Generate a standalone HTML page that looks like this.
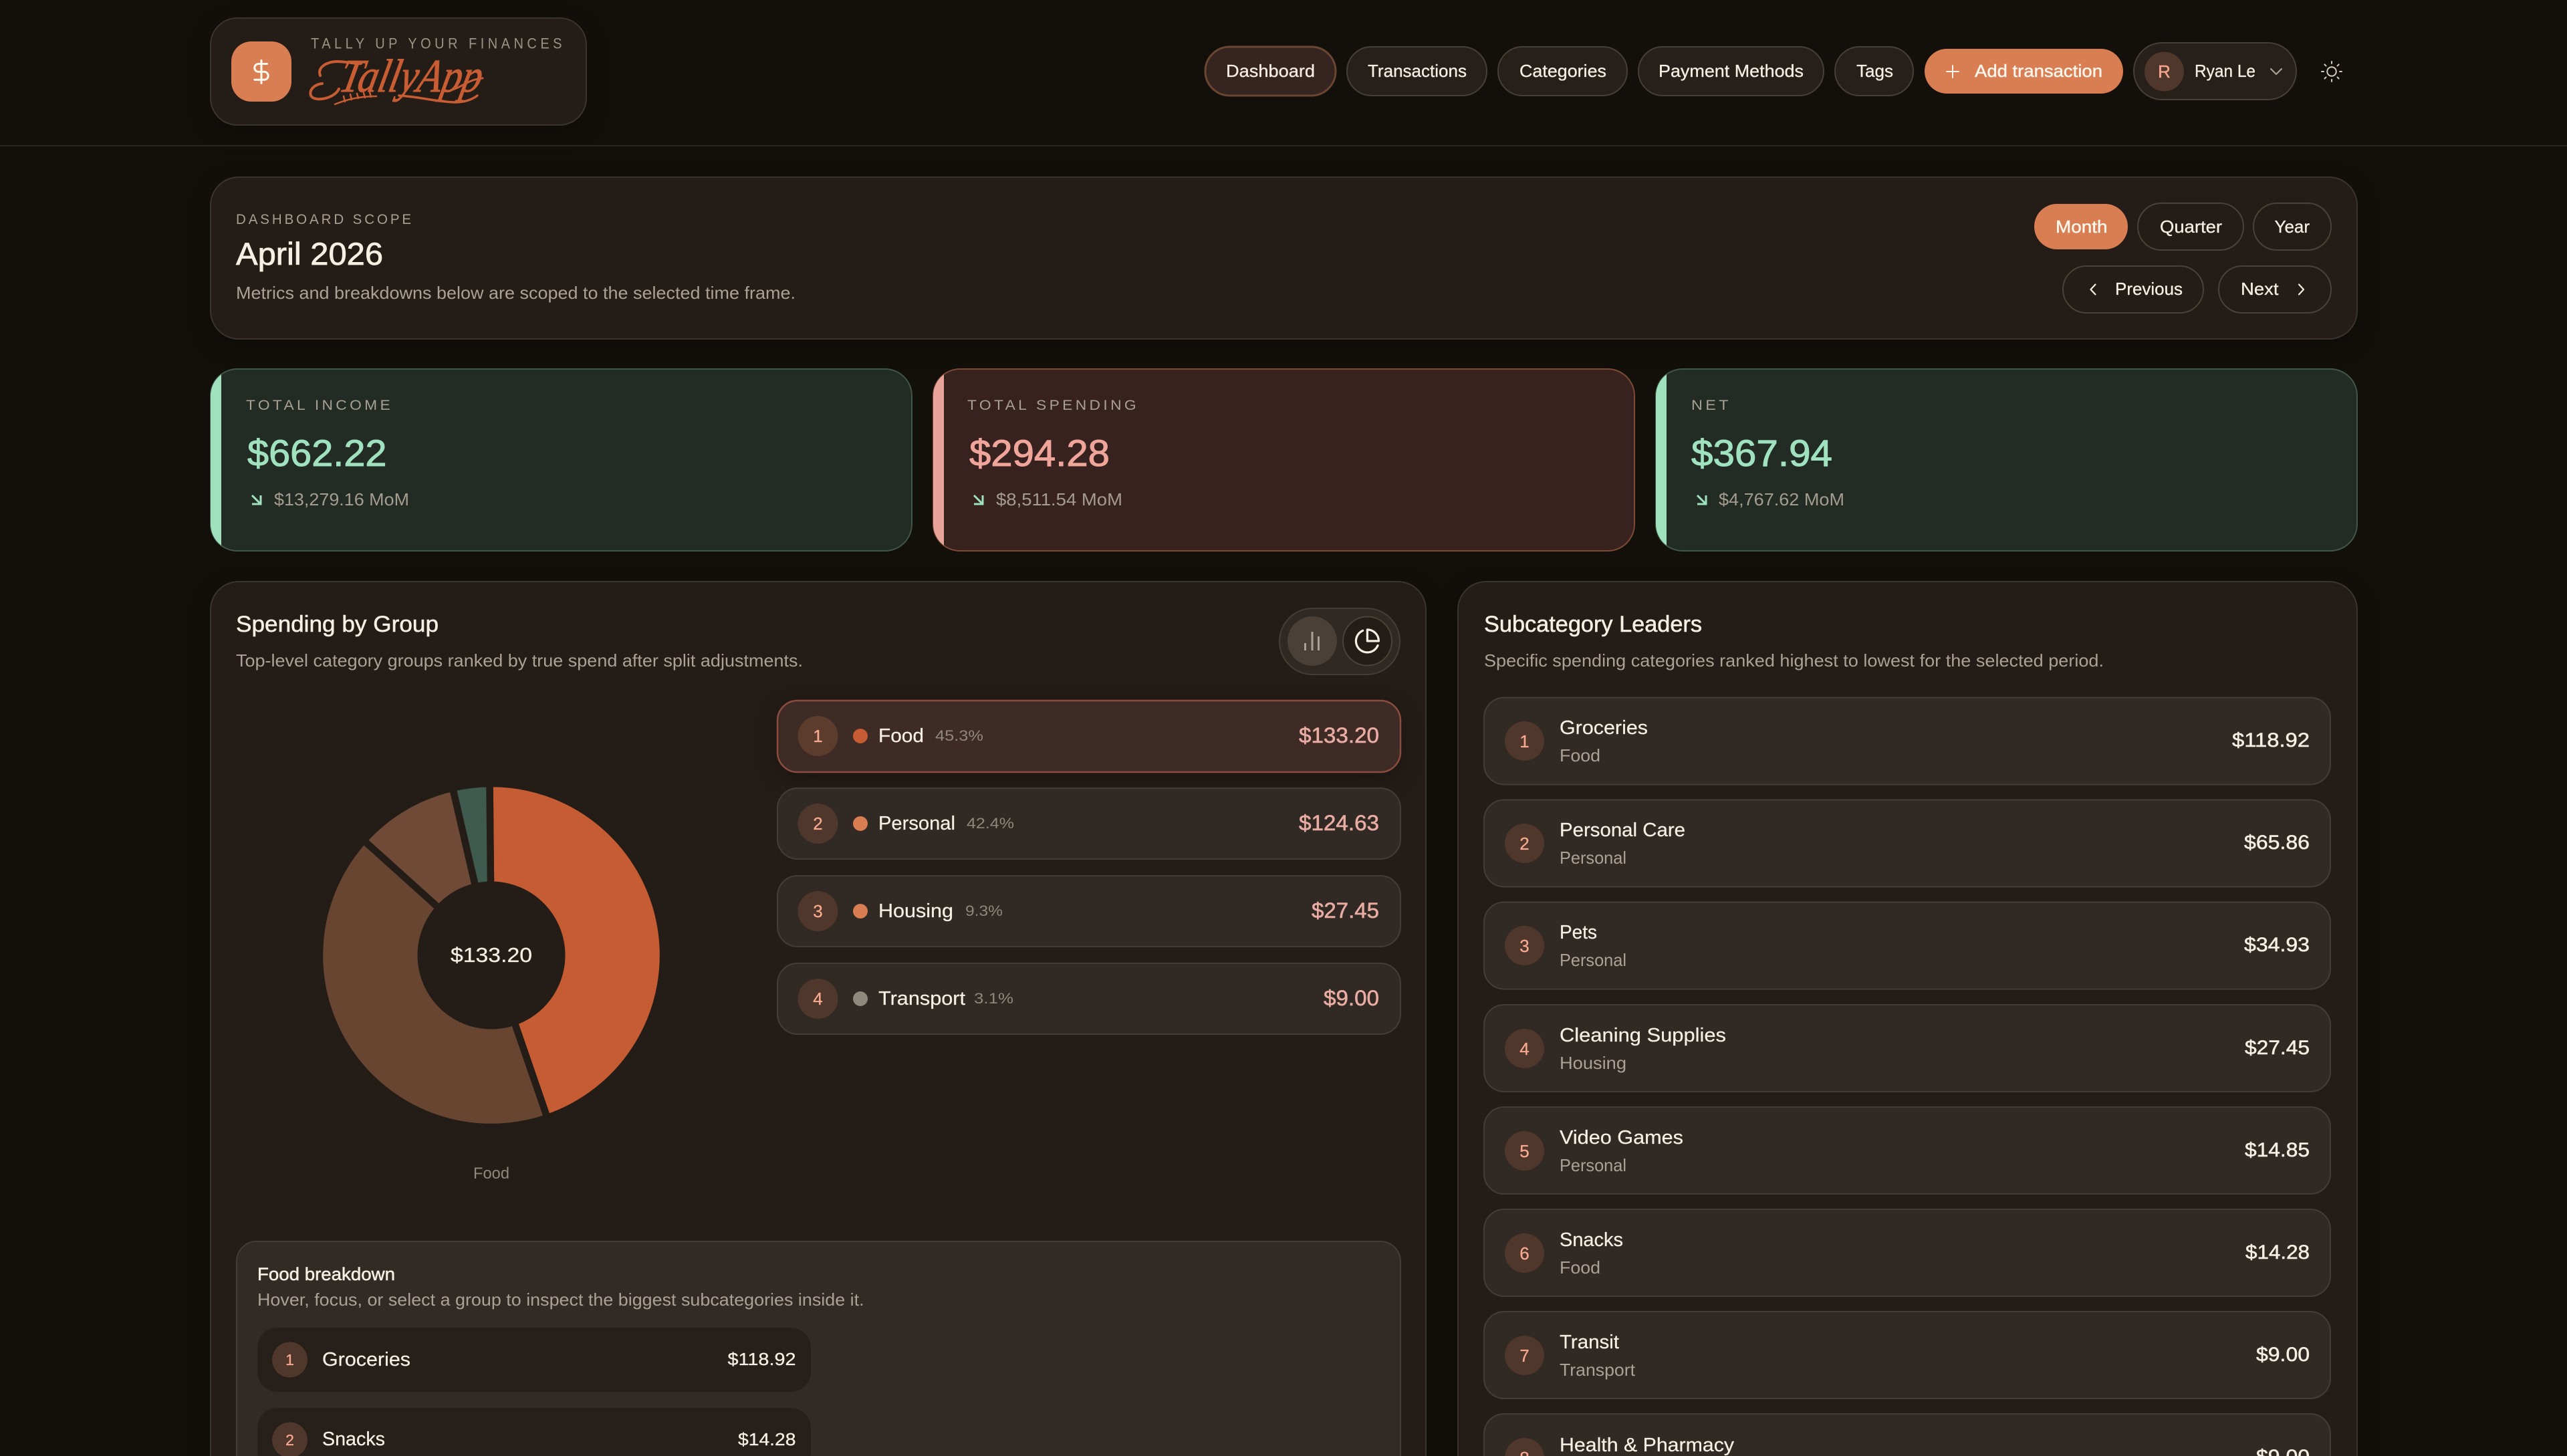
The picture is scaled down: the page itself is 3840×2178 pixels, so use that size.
<!DOCTYPE html>
<html lang="en"><head><meta charset="utf-8"><title>TallyApp Dashboard</title>
<style>
html,body{margin:0;padding:0;width:3840px;height:2178px;overflow:hidden;background:#13100b}
svg{display:block}
text{font-family:"Liberation Sans",sans-serif;font-size:26px;fill:#f6efe4;white-space:pre}
.n{stroke:#f6efe4;stroke-width:.3px}
.m{stroke:#f6efe4;stroke-width:.55px}
.mut{fill:#aaa296}
.ter{fill:#8f887c;font-size:22px}
.lab{fill:#a8a093;font-size:21px}
.pill{fill:#271f1a;stroke:#473e36;stroke-width:2}
.ghost{fill:#241c17;stroke:#4a4138;stroke-width:2}
.row{fill:#312924;stroke:#453d35;stroke-width:2}
.rank{fill:#50372b}
.rn{fill:#f7a991;font-size:26px;text-anchor:middle;stroke:#f7a991;stroke-width:.3px}
.amt{fill:#e9aca2;font-size:32px;stroke:#e9aca2;stroke-width:.6px}
.nm{font-size:29px;stroke:#f6efe4;stroke-width:.25px}
.ico{fill:none;stroke-linecap:round;stroke-linejoin:round}
.sh{filter:drop-shadow(0 10px 16px rgba(0,0,0,.28))}
</style></head><body>
<svg width="3840" height="2178" viewBox="0 0 3840 2178" xmlns="http://www.w3.org/2000/svg">
<defs>
<clipPath id="c1"><rect x="315" y="552" width="1049" height="272" rx="40"/></clipPath>
<clipPath id="c2"><rect x="1396" y="552" width="1049" height="272" rx="40"/></clipPath>
<clipPath id="c3"><rect x="2477" y="552" width="1049" height="272" rx="40"/></clipPath>
</defs>
<rect width="3840" height="2178" fill="#13100b"/>

<!-- header -->
<rect x="0" y="217" width="3840" height="2" fill="#2d2721"/>
<rect class="sh" x="315" y="27" width="562" height="160" rx="40" fill="#241d17" stroke="#3b332c" stroke-width="2"/>
<rect x="346" y="62" width="90" height="90" rx="30" fill="#d97d52"/>
<g class="ico" stroke="#fff6ec" stroke-width="1.800" transform="translate(370.600 87) scale(1.700)"><path d="M12 2v20"/><path d="M17 5H9.500a3.500 3.500 0 0 0 0 7h5a3.500 3.500 0 0 1 0 7H6"/></g>
<text x="465" y="72.600" textLength="381" lengthAdjust="spacingAndGlyphs" style="font-size:22px;fill:#9a9386;letter-spacing:6px">TALLY UP YOUR FINANCES</text>
<g transform="translate(0 137) skewX(-12)">
<text x="505" y="0" textLength="212" lengthAdjust="spacingAndGlyphs" style="font-family:'Liberation Serif',serif;font-style:italic;font-size:70px;fill:#c85c33;stroke:#c85c33;stroke-width:1px">TallyApp</text>
</g>
<g class="ico" stroke="#c85c33">
<path stroke-width="4" d="M479 113C474 100 490 92 505 92C520 92 530 96 540 95"/>
<path stroke-width="4" d="M507 133C500 148 470 153 465 143C462 133 472 126 482 125"/>
<path stroke-width="3.500" d="M597 143C630 145 650 152 680 153C695 153 706 149 714 143"/>
<path stroke-width="3" d="M677 134C692 130 700 119 722 117"/>
<path stroke-width="2.500" d="M501 156C520 148 540 144 563 144M516 152l-2-8M526 149l-2-8M536 147l-2-7M546 146l-2-7M555 145l-2-7"/>
</g>

<!-- nav -->
<rect x="1803" y="70" width="195" height="73" rx="36.500" fill="#35241f" stroke="#6a4632" stroke-width="3"/>
<text class="n" x="1834" y="115" textLength="133" lengthAdjust="spacingAndGlyphs">Dashboard</text>
<rect class="pill" x="2015" y="70" width="209" height="73" rx="36.500"/>
<text class="n" x="2046" y="115" textLength="148" lengthAdjust="spacingAndGlyphs">Transactions</text>
<rect class="pill" x="2241" y="70" width="193" height="73" rx="36.500"/>
<text class="n" x="2273" y="115" textLength="130" lengthAdjust="spacingAndGlyphs">Categories</text>
<rect class="pill" x="2451" y="70" width="277" height="73" rx="36.500"/>
<text class="n" x="2481" y="115" textLength="217" lengthAdjust="spacingAndGlyphs">Payment Methods</text>
<rect class="pill" x="2745" y="70" width="117" height="73" rx="36.500"/>
<text class="n" x="2777" y="115" textLength="55" lengthAdjust="spacingAndGlyphs">Tags</text>
<rect x="2879" y="73" width="297" height="67" rx="33.500" fill="#d97d52"/>
<g class="ico" stroke="#fff6ec" stroke-width="2"><path d="M2912 107h18M2921 98v18"/></g>
<text class="m" x="2954" y="115" textLength="191" lengthAdjust="spacingAndGlyphs" style="fill:#fff6ec">Add transaction</text>
<rect class="pill" x="3192" y="64" width="243" height="85" rx="42.500"/>
<circle cx="3237.500" cy="107" r="29.500" fill="#50372b"/>
<text x="3237.500" y="116" text-anchor="middle" style="fill:#f7a48f;font-size:26px;stroke:#f7a48f;stroke-width:.4px">R</text>
<text class="n" x="3283" y="115" textLength="91" lengthAdjust="spacingAndGlyphs">Ryan Le</text>
<path class="ico" stroke="#a9a195" stroke-width="2.200" d="M3397 103l8 8 8-8"/>
<g class="ico" stroke="#d8cfc0" stroke-width="1.300" transform="translate(3470 89) scale(1.500)"><circle cx="12" cy="12" r="4.500"/><path d="M12 2v2M12 20v2M4.930 4.930l1.410 1.410M17.660 17.660l1.410 1.410M2 12h2M20 12h2M6.340 17.660l-1.410 1.410M19.070 4.930l-1.410 1.410"/></g>

<!-- scope -->
<rect class="sh" x="315" y="265" width="3211" height="242" rx="42" fill="#241d17" stroke="#3b332c" stroke-width="2"/>
<text class="lab" x="353" y="335" textLength="266" lengthAdjust="spacingAndGlyphs" style="letter-spacing:4px">DASHBOARD SCOPE</text>
<text class="m" x="353" y="396" textLength="220" lengthAdjust="spacingAndGlyphs" style="font-size:47px;stroke-width:.8px">April 2026</text>
<text class="mut" x="353" y="447" textLength="837" lengthAdjust="spacingAndGlyphs">Metrics and breakdowns below are scoped to the selected time frame.</text>
<rect x="3043" y="305" width="140" height="68" rx="34" fill="#d97d52"/>
<text class="m" x="3075" y="348" textLength="77.500" lengthAdjust="spacingAndGlyphs" style="fill:#fff6ec">Month</text>
<rect class="ghost" x="3198" y="304" width="158" height="70" rx="35"/>
<text class="n" x="3231" y="348" textLength="93" lengthAdjust="spacingAndGlyphs">Quarter</text>
<rect class="ghost" x="3371" y="304" width="116" height="70" rx="35"/>
<text class="n" x="3402.500" y="348" textLength="52.500" lengthAdjust="spacingAndGlyphs">Year</text>
<rect class="ghost" x="3086" y="398" width="210" height="70" rx="35"/>
<path class="ico" stroke="#f6efe4" stroke-width="2.200" d="M3134.500 425.500l-7 7.500 7 7.500"/>
<text class="n" x="3164" y="441" textLength="101" lengthAdjust="spacingAndGlyphs">Previous</text>
<rect class="ghost" x="3319" y="398" width="168" height="70" rx="35"/>
<text class="n" x="3352" y="441" textLength="56.500" lengthAdjust="spacingAndGlyphs">Next</text>
<path class="ico" stroke="#f6efe4" stroke-width="2.200" d="M3439 425.500l7 7.500-7 7.500"/>

<!-- metric cards -->
<rect x="315" y="552" width="1049" height="272" rx="40" fill="#232c24" stroke="#3f5648" stroke-width="2"/>
<rect x="315" y="552" width="16" height="272" fill="#9fe0bd" clip-path="url(#c1)"/>
<text class="lab" x="368" y="613" textLength="220" lengthAdjust="spacingAndGlyphs" style="letter-spacing:4px">TOTAL INCOME</text>
<text x="370" y="697" textLength="208.500" lengthAdjust="spacingAndGlyphs" style="font-size:56px;fill:#a0e2c0;stroke:#a0e2c0;stroke-width:1px">$662.22</text>
<g class="ico" stroke="#a0e2c0" stroke-width="3" style="stroke-linecap:butt;stroke-linejoin:miter"><path d="M377 741l13 13M390 741v13h-13"/></g>
<text x="410" y="756" textLength="202" lengthAdjust="spacingAndGlyphs" style="fill:#a39c8f">$13,279.16 MoM</text>

<rect x="1396" y="552" width="1049" height="272" rx="40" fill="#37221f" stroke="#7d4a36" stroke-width="2"/>
<rect x="1396" y="552" width="16" height="272" fill="#e8a39a" clip-path="url(#c2)"/>
<text class="lab" x="1447" y="613" textLength="257" lengthAdjust="spacingAndGlyphs" style="letter-spacing:4px">TOTAL SPENDING</text>
<text x="1450" y="697" textLength="210" lengthAdjust="spacingAndGlyphs" style="font-size:56px;fill:#f0a59b;stroke:#f0a59b;stroke-width:1px">$294.28</text>
<g class="ico" stroke="#a0e2c0" stroke-width="3" style="stroke-linecap:butt;stroke-linejoin:miter"><path d="M1457 741l13 13M1470 741v13h-13"/></g>
<text x="1490" y="756" textLength="189" lengthAdjust="spacingAndGlyphs" style="fill:#a39c8f">$8,511.54 MoM</text>

<rect x="2477" y="552" width="1049" height="272" rx="40" fill="#232c24" stroke="#3f5648" stroke-width="2"/>
<rect x="2477" y="552" width="16" height="272" fill="#9fe0bd" clip-path="url(#c3)"/>
<text class="lab" x="2530" y="613" textLength="60" lengthAdjust="spacingAndGlyphs" style="letter-spacing:4px">NET</text>
<text x="2530" y="697" textLength="211" lengthAdjust="spacingAndGlyphs" style="font-size:56px;fill:#a0e2c0;stroke:#a0e2c0;stroke-width:1px">$367.94</text>
<g class="ico" stroke="#a0e2c0" stroke-width="3" style="stroke-linecap:butt;stroke-linejoin:miter"><path d="M2539 741l13 13M2552 741v13h-13"/></g>
<text x="2571" y="756" textLength="188" lengthAdjust="spacingAndGlyphs" style="fill:#a39c8f">$4,767.62 MoM</text>

<!-- left panel -->
<rect class="sh" x="315" y="870" width="1818" height="1500" rx="42" fill="#241c17" stroke="#3b332c" stroke-width="2"/>
<text class="m" x="353" y="945" textLength="303" lengthAdjust="spacingAndGlyphs" style="font-size:34px">Spending by Group</text>
<text class="mut" x="353" y="997" textLength="848" lengthAdjust="spacingAndGlyphs">Top-level category groups ranked by true spend after split adjustments.</text>

<rect x="1914" y="910" width="180" height="99" rx="49.500" fill="#302923" stroke="#453c35" stroke-width="2"/>
<circle cx="1963" cy="959" r="37" fill="#4a4038"/>
<g class="ico" stroke="#a9a195" stroke-width="3" style="stroke-linecap:butt"><path d="M1952.500 973v-11M1963 973v-28M1972.500 973v-21"/></g>
<circle cx="2045.500" cy="959" r="36.500" fill="#241c17" stroke="#4a4138" stroke-width="2"/>
<g class="ico" stroke="#f6efe4" stroke-width="1.900" transform="translate(2025 938.500) scale(1.700)"><path d="M21.210 15.890A10 10 0 1 1 8 2.830"/><path d="M22 12A10 10 0 0 0 12 2v10z"/></g>

<!-- donut -->
<g stroke="#241c17" stroke-width="10.500">
<path fill="#c55c33" d="M735 1429L732.500 1172A257 257 0 0 1 818.700 1672Z"/>
<path fill="#684530" d="M735 1429L818.700 1672A257 257 0 0 1 544 1257Z"/>
<path fill="#6f4a36" d="M735 1429L544 1257A257 257 0 0 1 677.200 1178.600Z"/>
<path fill="#3f5b50" d="M735 1429L677.200 1178.600A257 257 0 0 1 732.500 1172Z"/>
</g>
<circle cx="735" cy="1429" r="110.500" fill="#241c17"/>
<text class="n" x="674" y="1439" textLength="122" lengthAdjust="spacingAndGlyphs" style="font-size:31px">$133.20</text>
<text x="708" y="1763" textLength="54" lengthAdjust="spacingAndGlyphs" style="font-size:24px;fill:#8f887c">Food</text>

<!-- group rows -->
<rect class="sh" x="1163" y="1048" width="932" height="107" rx="30" fill="#3f2b25" stroke="#8a4c3f" stroke-width="2.500"/>
<circle class="rank" cx="1223.500" cy="1101" r="30" style="fill:#5c3d2d"/>
<text class="rn" x="1223.500" y="1110">1</text>
<circle cx="1287" cy="1101" r="11" fill="#c55c33"/>
<text class="nm" x="1314" y="1110" textLength="68" lengthAdjust="spacingAndGlyphs">Food</text>
<text class="ter" x="1399" y="1108" textLength="72" lengthAdjust="spacingAndGlyphs">45.3%</text>
<text class="amt" x="1943" y="1111" textLength="120" lengthAdjust="spacingAndGlyphs">$133.20</text>

<rect class="row" x="1163" y="1179" width="932" height="106" rx="30"/>
<circle class="rank" cx="1223.500" cy="1232" r="30"/>
<text class="rn" x="1223.500" y="1241">2</text>
<circle cx="1287" cy="1232" r="11" fill="#d97d52"/>
<text class="nm" x="1314" y="1241" textLength="115" lengthAdjust="spacingAndGlyphs">Personal</text>
<text class="ter" x="1446" y="1239" textLength="71" lengthAdjust="spacingAndGlyphs">42.4%</text>
<text class="amt" x="1943" y="1242" textLength="120" lengthAdjust="spacingAndGlyphs">$124.63</text>

<rect class="row" x="1163" y="1310" width="932" height="106" rx="30"/>
<circle class="rank" cx="1223.500" cy="1363" r="30"/>
<text class="rn" x="1223.500" y="1372">3</text>
<circle cx="1287" cy="1363" r="11" fill="#d97d52"/>
<text class="nm" x="1314" y="1372" textLength="112" lengthAdjust="spacingAndGlyphs">Housing</text>
<text class="ter" x="1444" y="1370" textLength="56" lengthAdjust="spacingAndGlyphs">9.3%</text>
<text class="amt" x="1962" y="1373" textLength="101" lengthAdjust="spacingAndGlyphs">$27.45</text>

<rect class="row" x="1163" y="1441" width="932" height="106" rx="30"/>
<circle class="rank" cx="1223.500" cy="1494" r="30"/>
<text class="rn" x="1223.500" y="1503">4</text>
<circle cx="1287" cy="1494" r="11" fill="#8f887c"/>
<text class="nm" x="1314" y="1503" textLength="130" lengthAdjust="spacingAndGlyphs">Transport</text>
<text class="ter" x="1457" y="1501" textLength="59" lengthAdjust="spacingAndGlyphs">3.1%</text>
<text class="amt" x="1980" y="1504" textLength="83" lengthAdjust="spacingAndGlyphs">$9.00</text>

<!-- breakdown -->
<rect x="354" y="1857" width="1741" height="500" rx="30" fill="#312a25" stroke="#453d35" stroke-width="2"/>
<text class="m" x="385" y="1915" textLength="206" lengthAdjust="spacingAndGlyphs" style="font-size:27px">Food breakdown</text>
<text class="mut" x="385" y="1953" textLength="907.600" lengthAdjust="spacingAndGlyphs">Hover, focus, or select a group to inspect the biggest subcategories inside it.</text>
<rect x="385" y="1986" width="828" height="96" rx="30" fill="#261f1a"/>
<circle class="rank" cx="433.500" cy="2034" r="26.500"/>
<text class="rn" x="433.500" y="2042" style="font-size:23px">1</text>
<text class="nm" x="482" y="2043" textLength="132" lengthAdjust="spacingAndGlyphs">Groceries</text>
<text class="n" x="1088.500" y="2042" textLength="102" lengthAdjust="spacingAndGlyphs">$118.92</text>
<rect x="385" y="2106" width="828" height="96" rx="30" fill="#261f1a"/>
<circle class="rank" cx="433.500" cy="2154" r="26.500"/>
<text class="rn" x="433.500" y="2162" style="font-size:23px">2</text>
<text class="nm" x="482" y="2162" textLength="94" lengthAdjust="spacingAndGlyphs">Snacks</text>
<text class="n" x="1104" y="2162" textLength="86.500" lengthAdjust="spacingAndGlyphs">$14.28</text>

<!-- right panel -->
<rect class="sh" x="2181" y="870" width="1345" height="1500" rx="42" fill="#241c17" stroke="#3b332c" stroke-width="2"/>
<text class="m" x="2220" y="945" textLength="326" lengthAdjust="spacingAndGlyphs" style="font-size:34px">Subcategory Leaders</text>
<text class="mut" x="2220" y="997" textLength="927" lengthAdjust="spacingAndGlyphs">Specific spending categories ranked highest to lowest for the selected period.</text>

<rect class="row" x="2220" y="1043.500" width="1266" height="130" rx="30"/>
<circle class="rank" cx="2280.500" cy="1108.500" r="29.500"/>
<text class="rn" x="2280.500" y="1118">1</text>
<text class="nm" x="2333" y="1098" textLength="132" lengthAdjust="spacingAndGlyphs">Groceries</text>
<text class="mut" x="2333" y="1139" textLength="61" lengthAdjust="spacingAndGlyphs">Food</text>
<text class="m" x="3339" y="1117" textLength="116" lengthAdjust="spacingAndGlyphs" style="font-size:30px">$118.92</text>

<rect class="row" x="2220" y="1196.500" width="1266" height="130" rx="30"/>
<circle class="rank" cx="2280.500" cy="1261.500" r="29.500"/>
<text class="rn" x="2280.500" y="1271">2</text>
<text class="nm" x="2333" y="1251" textLength="188" lengthAdjust="spacingAndGlyphs">Personal Care</text>
<text class="mut" x="2333" y="1292" textLength="100" lengthAdjust="spacingAndGlyphs">Personal</text>
<text class="m" x="3357" y="1270" textLength="98" lengthAdjust="spacingAndGlyphs" style="font-size:30px">$65.86</text>

<rect class="row" x="2220" y="1349.500" width="1266" height="130" rx="30"/>
<circle class="rank" cx="2280.500" cy="1414.500" r="29.500"/>
<text class="rn" x="2280.500" y="1424">3</text>
<text class="nm" x="2333" y="1404" textLength="56" lengthAdjust="spacingAndGlyphs">Pets</text>
<text class="mut" x="2333" y="1445" textLength="100" lengthAdjust="spacingAndGlyphs">Personal</text>
<text class="m" x="3357" y="1423" textLength="98" lengthAdjust="spacingAndGlyphs" style="font-size:30px">$34.93</text>

<rect class="row" x="2220" y="1503" width="1266" height="130" rx="30"/>
<circle class="rank" cx="2280.500" cy="1568.500" r="29.500"/>
<text class="rn" x="2280.500" y="1578">4</text>
<text class="nm" x="2333" y="1558" textLength="249" lengthAdjust="spacingAndGlyphs">Cleaning Supplies</text>
<text class="mut" x="2333" y="1599" textLength="100" lengthAdjust="spacingAndGlyphs">Housing</text>
<text class="m" x="3358" y="1577" textLength="97" lengthAdjust="spacingAndGlyphs" style="font-size:30px">$27.45</text>

<rect class="row" x="2220" y="1656" width="1266" height="130" rx="30"/>
<circle class="rank" cx="2280.500" cy="1721.500" r="29.500"/>
<text class="rn" x="2280.500" y="1731">5</text>
<text class="nm" x="2333" y="1711" textLength="185" lengthAdjust="spacingAndGlyphs">Video Games</text>
<text class="mut" x="2333" y="1752" textLength="100" lengthAdjust="spacingAndGlyphs">Personal</text>
<text class="m" x="3358" y="1730" textLength="97" lengthAdjust="spacingAndGlyphs" style="font-size:30px">$14.85</text>

<rect class="row" x="2220" y="1809" width="1266" height="130" rx="30"/>
<circle class="rank" cx="2280.500" cy="1874.500" r="29.500"/>
<text class="rn" x="2280.500" y="1884">6</text>
<text class="nm" x="2333" y="1864" textLength="95" lengthAdjust="spacingAndGlyphs">Snacks</text>
<text class="mut" x="2333" y="1905" textLength="61" lengthAdjust="spacingAndGlyphs">Food</text>
<text class="m" x="3359" y="1883" textLength="96" lengthAdjust="spacingAndGlyphs" style="font-size:30px">$14.28</text>

<rect class="row" x="2220" y="1962" width="1266" height="130" rx="30"/>
<circle class="rank" cx="2280.500" cy="2027.500" r="29.500"/>
<text class="rn" x="2280.500" y="2037">7</text>
<text class="nm" x="2333" y="2017" textLength="89" lengthAdjust="spacingAndGlyphs">Transit</text>
<text class="mut" x="2333" y="2058" textLength="113" lengthAdjust="spacingAndGlyphs">Transport</text>
<text class="m" x="3375" y="2036" textLength="80" lengthAdjust="spacingAndGlyphs" style="font-size:30px">$9.00</text>

<rect class="row" x="2220" y="2115" width="1266" height="130" rx="30"/>
<circle class="rank" cx="2280.500" cy="2180.500" r="29.500"/>
<text class="rn" x="2280.500" y="2190">8</text>
<text class="nm" x="2333" y="2171" textLength="261" lengthAdjust="spacingAndGlyphs">Health &amp; Pharmacy</text>
<text class="m" x="3375" y="2189" textLength="80" lengthAdjust="spacingAndGlyphs" style="font-size:30px">$9.00</text>
</svg>
</body></html>
